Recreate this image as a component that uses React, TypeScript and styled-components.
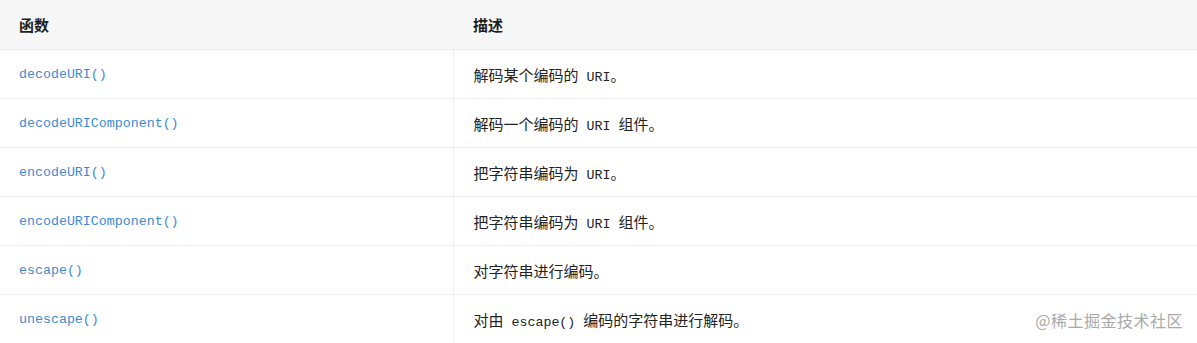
import React from "react";
import styled, { createGlobalStyle } from "styled-components";

const Global = createGlobalStyle`
  html, body { margin: 0; padding: 0; background: #fff; }
  body { font-family: "Noto Sans CJK SC", "Noto Sans", sans-serif; }
`;

const Wrap = styled.div`
  position: relative;
  width: 1197px;
  height: 343px;
  overflow: hidden;
`;

const Table = styled.table`
  width: 100%;
  border-collapse: collapse;
  table-layout: fixed;
`;

const HeadCell = styled.th<{ $w?: number; $pad?: number }>`
  width: ${(p) => (p.$w ? `${p.$w}px` : "auto")};
  height: 49px;
  padding: 0 0 0 ${(p) => p.$pad ?? 19}px;
  box-sizing: border-box;
  background: #f7f7f8;
  text-align: left;
  font-family: "Noto Sans CJK SC", sans-serif;
  font-size: 15px;
  font-weight: 700;
  color: #1f1f1f;
  border-bottom: 1px solid #ececec;
  vertical-align: middle;
`;

const Row = styled.tr`
  border-bottom: 1px solid #efefef;
  &:last-child { border-bottom: none; }
`;

const Cell = styled.td<{ $code?: boolean }>`
  height: 49px;
  padding: 2px 0 0 ${(p) => (p.$code ? "19px" : "20px")};
  box-sizing: border-box;
  vertical-align: middle;
  border-left: ${(p) => (p.$code ? "none" : "1px solid #efefef")};
  font-family: "Liberation Mono", "Noto Sans CJK SC", monospace;
  font-size: 13.3px;
  color: ${(p) => (p.$code ? "#3d89d5" : "#222")};
  white-space: nowrap;
`;

const Cjk = styled.span`
  font-family: "Noto Sans CJK SC", sans-serif;
  font-size: 15px;
`;

const Watermark = styled.div`
  position: absolute;
  right: 14px;
  bottom: 11px;
  font-family: "Noto Sans CJK SC", sans-serif;
  font-size: 16px;
  color: #a9a9a9;
  letter-spacing: 0.5px;
`;

const rows: [string, string][] = [
  ["decodeURI()", "解码某个编码的 URI。"],
  ["decodeURIComponent()", "解码一个编码的 URI 组件。"],
  ["encodeURI()", "把字符串编码为 URI。"],
  ["encodeURIComponent()", "把字符串编码为 URI 组件。"],
  ["escape()", "对字符串进行编码。"],
  ["unescape()", "对由 escape() 编码的字符串进行解码。"],
];

function renderDesc(s: string) {
  const parts = s.split(/([\u3000-\u9fff\uff00-\uffef]+)/);
  return parts.map((p, i) =>
    /[\u3000-\u9fff\uff00-\uffef]/.test(p) ? <Cjk key={i}>{p}</Cjk> : <React.Fragment key={i}>{p}</React.Fragment>
  );
}

export default function App() {
  return (
    <Wrap>
      <Global />
      <Table>
        <thead>
          <tr>
            <HeadCell $w={453}>函数</HeadCell>
            <HeadCell $pad={20}>描述</HeadCell>
          </tr>
        </thead>
        <tbody>
          {rows.map(([f, d]) => (
            <Row key={f}>
              <Cell $code>{f}</Cell>
              <Cell>{renderDesc(d)}</Cell>
            </Row>
          ))}
        </tbody>
      </Table>
      <Watermark>@稀土掘金技术社区</Watermark>
    </Wrap>
  );
}
